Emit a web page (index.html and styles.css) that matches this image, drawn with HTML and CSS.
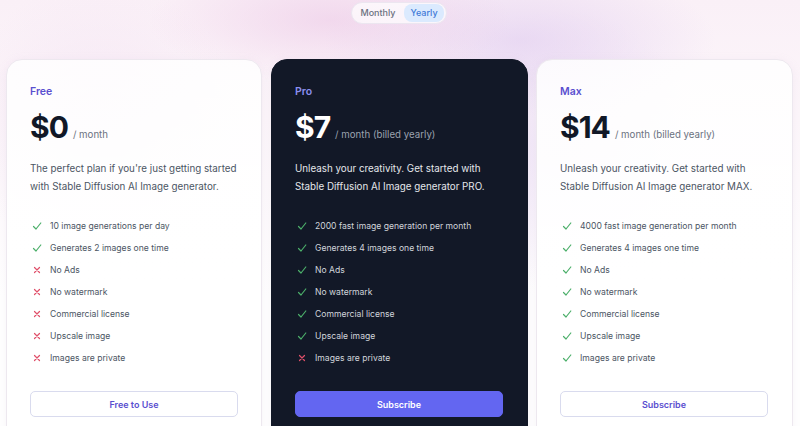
FILE: index.html
```html
<!DOCTYPE html>
<html lang="en">
<head>
<meta charset="utf-8">
<title>Pricing</title>
<link rel="stylesheet" href="styles.css">
</head>
<body>
<div class="page">
  <div class="toggle-wrap">
    <div class="toggle">
      <span class="opt">Monthly</span>
      <span class="opt active">Yearly</span>
    </div>
  </div>
  <div class="plans">
    <div class="card first">
      <div class="label">Free</div>
      <div class="price-row"><span class="price">$0</span><span class="per">/ month</span></div>
      <p class="desc">The perfect plan if you're just getting started with Stable Diffusion AI Image generator.</p>
      <ul class="features">
        <li><svg class="ic yes" viewBox="0 0 10 10"><path d="M1.5 5.5 L4 8 L8.8 2"/></svg>10 image generations per day</li>
        <li><svg class="ic yes" viewBox="0 0 10 10"><path d="M1.5 5.5 L4 8 L8.8 2"/></svg>Generates 2 images one time</li>
        <li><svg class="ic no" viewBox="0 0 10 10"><path d="M2.5 2.5 L7.5 7.5 M7.5 2.5 L2.5 7.5"/></svg>No Ads</li>
        <li><svg class="ic no" viewBox="0 0 10 10"><path d="M2.5 2.5 L7.5 7.5 M7.5 2.5 L2.5 7.5"/></svg>No watermark</li>
        <li><svg class="ic no" viewBox="0 0 10 10"><path d="M2.5 2.5 L7.5 7.5 M7.5 2.5 L2.5 7.5"/></svg>Commercial license</li>
        <li><svg class="ic no" viewBox="0 0 10 10"><path d="M2.5 2.5 L7.5 7.5 M7.5 2.5 L2.5 7.5"/></svg>Upscale image</li>
        <li><svg class="ic no" viewBox="0 0 10 10"><path d="M2.5 2.5 L7.5 7.5 M7.5 2.5 L2.5 7.5"/></svg>Images are private</li>
      </ul>
      <button class="btn outline">Free to Use</button>
    </div>
    <div class="card dark">
      <div class="label">Pro</div>
      <div class="price-row"><span class="price">$7</span><span class="per">/ month (billed yearly)</span></div>
      <p class="desc">Unleash your creativity. Get started with Stable Diffusion AI Image generator PRO.</p>
      <ul class="features">
        <li><svg class="ic yes" viewBox="0 0 10 10"><path d="M1.5 5.5 L4 8 L8.8 2"/></svg>2000 fast image generation per month</li>
        <li><svg class="ic yes" viewBox="0 0 10 10"><path d="M1.5 5.5 L4 8 L8.8 2"/></svg>Generates 4 images one time</li>
        <li><svg class="ic yes" viewBox="0 0 10 10"><path d="M1.5 5.5 L4 8 L8.8 2"/></svg>No Ads</li>
        <li><svg class="ic yes" viewBox="0 0 10 10"><path d="M1.5 5.5 L4 8 L8.8 2"/></svg>No watermark</li>
        <li><svg class="ic yes" viewBox="0 0 10 10"><path d="M1.5 5.5 L4 8 L8.8 2"/></svg>Commercial license</li>
        <li><svg class="ic yes" viewBox="0 0 10 10"><path d="M1.5 5.5 L4 8 L8.8 2"/></svg>Upscale image</li>
        <li><svg class="ic no" viewBox="0 0 10 10"><path d="M2.5 2.5 L7.5 7.5 M7.5 2.5 L2.5 7.5"/></svg>Images are private</li>
      </ul>
      <button class="btn solid">Subscribe</button>
    </div>
    <div class="card">
      <div class="label">Max</div>
      <div class="price-row"><span class="price">$14</span><span class="per">/ month (billed yearly)</span></div>
      <p class="desc">Unleash your creativity. Get started with Stable Diffusion AI Image generator MAX.</p>
      <ul class="features">
        <li><svg class="ic yes" viewBox="0 0 10 10"><path d="M1.5 5.5 L4 8 L8.8 2"/></svg>4000 fast image generation per month</li>
        <li><svg class="ic yes" viewBox="0 0 10 10"><path d="M1.5 5.5 L4 8 L8.8 2"/></svg>Generates 4 images one time</li>
        <li><svg class="ic yes" viewBox="0 0 10 10"><path d="M1.5 5.5 L4 8 L8.8 2"/></svg>No Ads</li>
        <li><svg class="ic yes" viewBox="0 0 10 10"><path d="M1.5 5.5 L4 8 L8.8 2"/></svg>No watermark</li>
        <li><svg class="ic yes" viewBox="0 0 10 10"><path d="M1.5 5.5 L4 8 L8.8 2"/></svg>Commercial license</li>
        <li><svg class="ic yes" viewBox="0 0 10 10"><path d="M1.5 5.5 L4 8 L8.8 2"/></svg>Upscale image</li>
        <li><svg class="ic yes" viewBox="0 0 10 10"><path d="M1.5 5.5 L4 8 L8.8 2"/></svg>Images are private</li>
      </ul>
      <button class="btn outline">Subscribe</button>
    </div>
  </div>
</div>
</body>
</html>
```
FILE: styles.css
```css
* { box-sizing: border-box; }
html, body { margin: 0; padding: 0; }
body {
  width: 800px;
  height: 426px;
  overflow: hidden;
  font-family: Inter, "Noto Sans", sans-serif;
  background:
    radial-gradient(ellipse 260px 90px at 330px 20px, rgba(236, 200, 230, 0.6), transparent 70%),
    radial-gradient(ellipse 280px 110px at 520px 40px, rgba(225, 205, 240, 0.65), transparent 70%),
    radial-gradient(ellipse 200px 200px at 100px 120px, rgba(240, 220, 240, 0.5), transparent 70%),
    radial-gradient(ellipse 200px 200px at 560px 150px, rgba(230, 215, 245, 0.5), transparent 70%),
    linear-gradient(#faf0f7, #ffffff 70%);
}
.page { padding: 2px 7px 0 6px; }
.toggle-wrap { display: flex; justify-content: center; }
.toggle {
  display: flex;
  align-items: center;
  gap: 3px;
  height: 22px;
  padding: 2px;
  border: 1px solid #ece6f0;
  border-radius: 11px;
  background: rgba(255, 255, 255, 0.7);
  margin-left: -1px;
}
.opt {
  font-size: 9px;
  font-weight: 500;
  color: #6b7280;
  padding: 0 6px;
  height: 16px;
  line-height: 16px;
  border-radius: 8px;
}
.opt.active {
  background: #dbeafe;
  color: #3f7ad8;
  height: 18px;
  line-height: 18px;
}
.plans {
  margin-top: 35px;
  display: grid;
  grid-template-columns: 257px 257px 257px;
  gap: 9px 8px;
}
.card {
  height: 400px;
  border: 1px solid #ede8ef;
  border-radius: 16px;
  background: linear-gradient(180deg, rgba(255,255,255,0.85), #ffffff 60%);
  padding: 24px 23px 0 23px;
  box-shadow: 0 2px 10px rgba(200, 180, 210, 0.15);
}
.card.first { width: 256px; padding-left: 23px; }
.card.dark {
  background: #121827;
  border-color: #121827;
}
.label {
  font-size: 10.5px;
  font-weight: 600;
  line-height: 16px;
  color: #5a4fcf;
}
.dark .label { color: #8b8ff0; }
.price-row {
  margin-top: 9px;
  display: flex;
  align-items: baseline;
  height: 36px;
}
.price {
  font-size: 30px;
  font-weight: 700;
  letter-spacing: -1px;
  color: #111827;
  line-height: 36px;
}
.dark .price { color: #ffffff; }
.per {
  margin-left: 5px;
  font-size: 9.7px;
  color: #6b7280;
}
.dark .per { color: #9ca3af; }
.desc {
  margin: 15px 0 0 0;
  font-size: 9.8px;
  line-height: 17.5px;
  color: #4b5563;
}
.dark .desc { color: #e5e7eb; }
.features {
  list-style: none;
  margin: 20px 0 0 0;
  padding: 0;
}
.features li {
  display: flex;
  align-items: center;
  height: 22px;
  font-size: 8.6px;
  color: #4b5563;
}
.dark .features li { color: #d1d5db; }
.ic {
  width: 10px;
  height: 10px;
  margin-left: 2px;
  margin-right: 8px;
  fill: none;
  stroke-width: 1.2;
  stroke-linecap: round;
  stroke-linejoin: round;
}
.ic.yes { stroke: #4caf6a; }
.ic.no { stroke: #e0506a; }
.btn {
  display: block;
  width: 208px;
  height: 26px;
  margin-top: 22px;
  border-radius: 5px;
  font-family: inherit;
  font-size: 9px;
  font-weight: 600;
  cursor: pointer;
}
.btn.outline {
  background: #ffffff;
  border: 1px solid #d9dbee;
  color: #5a4fcf;
}
.btn.solid {
  background: #6366f1;
  border: 1px solid #6366f1;
  color: #ffffff;
}
```
